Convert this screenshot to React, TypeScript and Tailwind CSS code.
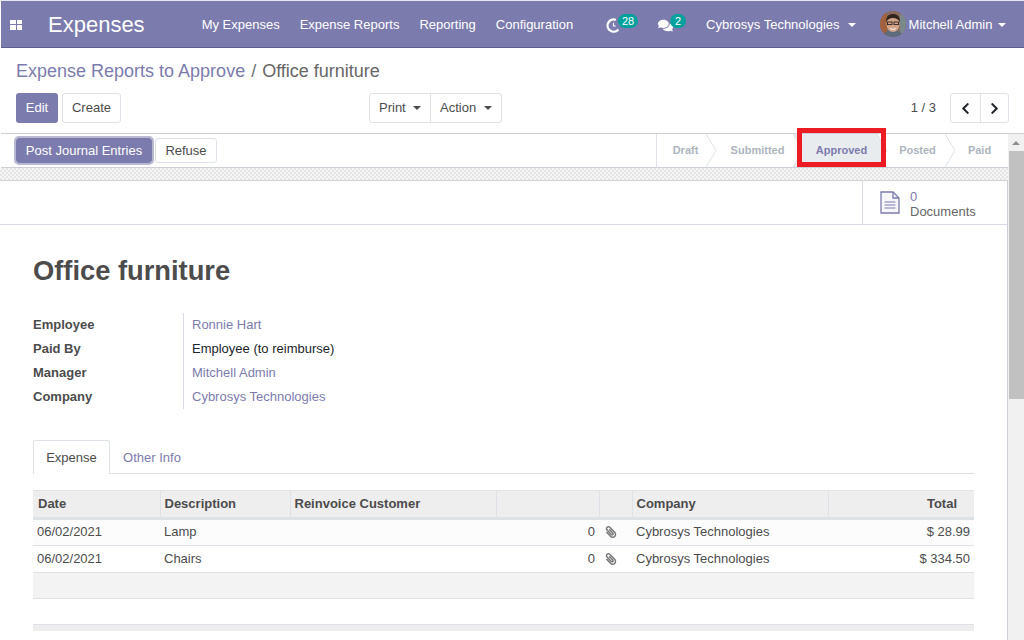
import { FaChevronLeft, FaChevronRight, FaComments, FaPaperclip } from 'react-icons/fa';

const menuItems = ['My Expenses', 'Expense Reports', 'Reporting', 'Configuration'];

const stages = [
  { label: 'Draft', width: 'w-[57px]' },
  { label: 'Submitted', width: 'w-[87px]' },
  { label: 'Approved', width: 'w-[81px]', active: true },
  { label: 'Posted', width: 'w-[71px]' },
  { label: 'Paid', width: 'w-[53px]' },
];

const fields = [
  { label: 'Employee', value: 'Ronnie Hart', link: true },
  { label: 'Paid By', value: 'Employee (to reimburse)', link: false },
  { label: 'Manager', value: 'Mitchell Admin', link: true },
  { label: 'Company', value: 'Cybrosys Technologies', link: true },
];

const rows = [
  { date: '06/02/2021', description: 'Lamp', total: '$ 28.99', dotted: true },
  { date: '06/02/2021', description: 'Chairs', total: '$ 334.50', dotted: false },
];

const Caret = () => (
  <span className="inline-block w-0 h-0 border-x-[4px] border-x-transparent border-t-[4px] border-t-current" />
);

const Avatar = () => (
  <svg width="26" height="26" viewBox="0 0 26 26" className="shrink-0">
    <defs>
      <clipPath id="avatar-clip">
        <circle cx="13" cy="13" r="13" />
      </clipPath>
    </defs>
    <g clipPath="url(#avatar-clip)">
      <rect width="26" height="26" fill="#8a6a5c" />
      <rect x="0" y="0" width="7" height="26" fill="#a0613f" />
      <rect x="20" y="0" width="6" height="26" fill="#7a8a8c" />
      <path d="M3 26c1-5 5-7 10-7s9 2 10 7z" fill="#5d6b7d" />
      <ellipse cx="13" cy="13" rx="6.5" ry="8" fill="#d3a48a" />
      <path d="M6 11c0-6 3-8 7-8s7 2 7 8c-2-3-4-4-7-4s-5 1-7 4z" fill="#33261f" />
      <rect x="7.5" y="11" width="4.5" height="2.6" fill="none" stroke="#2b2320" strokeWidth="0.9" />
      <rect x="14" y="11" width="4.5" height="2.6" fill="none" stroke="#2b2320" strokeWidth="0.9" />
      <path d="M10 17.5c2 1.2 4 1.2 6 0" fill="none" stroke="#f3e4dc" strokeWidth="1.2" />
    </g>
  </svg>
);

const DocumentIcon = () => (
  <svg width="20" height="23" viewBox="0 0 20 23" className="shrink-0" fill="none" stroke="#7c7bad" strokeWidth="1.3">
    <path d="M1 1h12l6 6v15H1z" fill="#f7f7fb" />
    <path d="M13 1v6h6" />
    <path d="M4.5 11h11M4.5 14h11M4.5 17h11" strokeWidth="1" />
  </svg>
);

const App = () => {
  return (
    <div className="w-[1024px] h-[640px] overflow-hidden relative flex flex-col bg-white text-[13px] text-[#4c4c4c] [font-family:Liberation_Sans,Arial,sans-serif]">
      <div className="h-[1px] bg-[#e6e6ee] shrink-0" />
      {/* Navbar */}
      <nav className="h-[47px] shrink-0 ml-[1px] pt-[1px] bg-[#7c7bad] border-b border-[#5f5e8f] text-white flex items-center whitespace-nowrap">
        <div className="w-[12px] h-[10px] ml-[9px] grid grid-cols-2 gap-[1px]">
          <span className="bg-white" />
          <span className="bg-white" />
          <span className="bg-white" />
          <span className="bg-white" />
        </div>
        <span className="ml-[26px] text-[22px] leading-none">Expenses</span>
        <div className="ml-[57px] flex gap-[20px]">
          {menuItems.map((item) => (
            <span key={item}>{item}</span>
          ))}
        </div>
        <div className="ml-[33px] flex items-center">
          <svg width="15" height="15" viewBox="0 0 16 16" className="shrink-0 mt-[1px]">
            <path d="M13.2 12.2A6.5 6.5 0 1 1 10.5 2" fill="none" stroke="white" strokeWidth="2.4" />
            <path d="M8 5v3.5h2.5" fill="none" stroke="white" strokeWidth="1.2" />
          </svg>
          <span className="-ml-[3px] -mt-[7px] h-[14px] w-[20px] rounded-full bg-[#00a09d] text-[11px] leading-[14px] text-center">28</span>
        </div>
        <div className="ml-[20px] flex items-center">
          <FaComments size={15} className="shrink-0 mt-[1px]" />
          <span className="-ml-[3px] -mt-[7px] h-[14px] w-[16px] rounded-full bg-[#00a09d] text-[11px] leading-[14px] text-center">2</span>
        </div>
        <span className="ml-[20px]">Cybrosys Technologies</span>
        <span className="ml-[8px] flex">
          <Caret />
        </span>
        <span className="ml-[24px] -mt-[1px]">
          <Avatar />
        </span>
        <span className="ml-[3px]">Mitchell Admin</span>
        <span className="ml-[6px] flex">
          <Caret />
        </span>
      </nav>

      {/* Control panel */}
      <div className="h-[86px] shrink-0 ml-[1px] border-b border-[#cfcfd6] px-[15px] pt-[13px]">
        <div className="h-[20px] flex items-center text-[18px] gap-[6px]">
          <span className="text-[#7c7bad]">Expense Reports to Approve</span>
          <span className="text-[#6c757d]">/</span>
          <span className="text-[#666666]">Office furniture</span>
        </div>
        <div className="mt-[12px] flex items-center">
          <button className="h-[30px] w-[42px] rounded-[3px] bg-[#7c7bad] text-white">Edit</button>
          <button className="h-[30px] w-[59px] ml-[4px] rounded-[3px] border border-[#dee2e6] bg-white">Create</button>
          <div className="ml-[248px] h-[30px] flex rounded-[3px] border border-[#dee2e6]">
            <button className="w-[60px] pl-[9px] flex items-center gap-[7px]">
              Print <Caret />
            </button>
            <button className="w-[71px] pl-[9px] border-l border-[#dee2e6] flex items-center gap-[8px]">
              Action <Caret />
            </button>
          </div>
          <span className="ml-auto text-[#4c4c4c]">1 / 3</span>
          <div className="ml-[14px] h-[30px] flex rounded-[3px] border border-[#dee2e6] text-[#212529]">
            <button className="w-[29px] flex items-center justify-center">
              <FaChevronLeft size={13} />
            </button>
            <button className="w-[28px] border-l border-[#dee2e6] flex items-center justify-center">
              <FaChevronRight size={13} />
            </button>
          </div>
        </div>
      </div>

      <div className="flex-1 min-h-0 flex">
        <div className="w-[1008px] shrink-0 flex flex-col">
          {/* Status bar */}
          <div className="h-[34px] shrink-0 ml-[1px] border-b border-[#cfcfd6] flex items-center justify-between">
            <div className="ml-[15px] flex items-center">
              <button className="h-[25px] w-[136px] rounded-[3px] bg-[#7c7bad] text-white outline-[2px] outline-[#b8b8d2]">Post Journal Entries</button>
              <button className="h-[25px] w-[62px] ml-[3px] rounded-[3px] border border-[#dee2e6] bg-white">Refuse</button>
            </div>
            <div className="h-full mr-[2px] flex border-l border-[#dee2e6]">
              {stages.map((stage, i) => (
                <div
                  key={stage.label}
                  className={`${stage.width} relative flex items-center justify-center text-[11px] font-bold ${stage.active ? 'bg-[#e9ecef] text-[#7c7bad]' : 'text-[#adb5bd]'}`}
                >
                  {stage.label}
                  {i < stages.length - 1 && (
                    <svg width="11" height="33" viewBox="0 0 11 33" className={`absolute top-0 z-10 ${stage.active ? '-right-[6px]' : '-right-[3px]'}`}>
                      <rect width="11" height="33" fill={stages[i + 1].active ? '#e9ecef' : 'white'} />
                      <path d="M0 0L10 16.5L0 33" fill={stage.active ? '#e9ecef' : 'white'} stroke="#dee2e6" />
                    </svg>
                  )}
                </div>
              ))}
            </div>
          </div>

          {/* Form sheet */}
          <div className="flex-1 min-h-0 pt-[12px] bg-[repeating-conic-gradient(#e4e4e4_0%_25%,#f6f6f6_0%_50%)] bg-[length:4px_4px]">
            <div className="h-full bg-white border-t border-r border-[#cfcfd6] overflow-hidden">
              <div className="h-[44px] border-b border-[#d8dae4] flex justify-end">
                <div className="w-[145px] border-l border-[#d8dae4] flex items-center pl-[17px] gap-[10px]">
                  <DocumentIcon />
                  <div className="pt-[2px] text-[#666666]">
                    <div className="h-[15px] leading-[15px] text-[#7c7bad]">0</div>
                    <div className="h-[15px] leading-[15px]">Documents</div>
                  </div>
                </div>
              </div>

              <div className="px-[33px]">
                <h1 className="mt-[27px] text-[27.3px] leading-[37px] font-bold text-[#4c4c4c]">Office furniture</h1>

                <div className="mt-[24px] flex flex-col">
                  {fields.map((field) => (
                    <div key={field.label} className="h-[24px] flex items-center">
                      <span className="w-[150px] font-bold">{field.label}</span>
                      <span className={`h-full flex items-center pl-[8px] border-l border-[#d8dae4] ${field.link ? 'text-[#7c7bad]' : 'text-[#212529]'}`}>
                        {field.value}
                      </span>
                    </div>
                  ))}
                </div>

                <div className="mt-[31px] h-[34px] w-[941px] flex border-b border-[#dee2e6]">
                  <div className="w-[77px] h-[34px] border-x border-t border-[#dee2e6] rounded-t-[3px] bg-white flex items-center justify-center">Expense</div>
                  <div className="w-[84px] pt-[2px] flex items-center justify-center text-[#7c7bad]">Other Info</div>
                </div>

                <table className="mt-[16px] w-[941px] table-fixed border-collapse">
                  <colgroup>
                    <col className="w-[127px]" />
                    <col className="w-[130px]" />
                    <col className="w-[206px]" />
                    <col className="w-[103px]" />
                    <col className="w-[33px]" />
                    <col className="w-[196px]" />
                    <col className="w-[146px]" />
                  </colgroup>
                  <thead>
                    <tr className="h-[28px] bg-[#eeeeee] border-t border-[#e2e2e2] border-b-[3px] border-b-[#dee2e6] font-bold">
                      <th className="text-left font-bold px-[5px] border-r border-[#dee2e6]">Date</th>
                      <th className="text-left font-bold px-[4px] border-r border-[#dee2e6]">Description</th>
                      <th className="text-left font-bold px-[4px] border-r border-[#dee2e6]">Reinvoice Customer</th>
                      <th className="border-r border-[#dee2e6]"></th>
                      <th className="border-r border-[#dee2e6]"></th>
                      <th className="text-left font-bold px-[4px] border-r border-[#dee2e6]">Company</th>
                      <th className="text-right font-bold pr-[17px]">Total</th>
                    </tr>
                  </thead>
                  <tbody>
                    {rows.map((row) => (
                      <tr key={row.description} className={`h-[27px] border-b border-[#dee2e6] ${row.dotted ? 'bg-[#fcfcfc] [&>td]:pb-[1px]' : 'bg-white'}`}>
                        <td className="px-[4px]">{row.date}</td>
                        <td className="px-[4px]">{row.description}</td>
                        <td></td>
                        <td className="text-right pr-[4px]">0</td>
                        <td className="pl-[6px]">
                          <FaPaperclip size={12} className="text-[#777777] -scale-x-100" />
                        </td>
                        <td className="px-[4px]">Cybrosys Technologies</td>
                        <td className="text-right pr-[4px]">{row.total}</td>
                      </tr>
                    ))}
                    <tr className="h-[26px] bg-[#f3f3f3] border-b border-[#dee2e6]">
                      <td colSpan={7}></td>
                    </tr>
                    <tr className="h-[26px] bg-white border-b border-[#dee2e6]">
                      <td colSpan={7}></td>
                    </tr>
                  </tbody>
                </table>
                <div className="w-[941px] h-[6px] bg-[#eeeeee]" />
              </div>
            </div>
          </div>
        </div>

        {/* Scrollbar */}
        <div className="flex-1 bg-[#f1f1f1] flex flex-col items-center">
          <div className="h-[17px] w-full flex items-center justify-center">
            <span className="w-0 h-0 border-x-[4px] border-x-transparent border-b-[4px] border-b-[#8f8f8f]" />
          </div>
          <div className="w-[15px] h-[248px] bg-[#c1c1c1]" />
        </div>
      </div>

      {/* Red annotation box */}
      <div className="absolute left-[797px] top-[128px] w-[89px] h-[39px] border-[5px] border-[#ed1c24] z-20" />
    </div>
  );
};

export default App;
